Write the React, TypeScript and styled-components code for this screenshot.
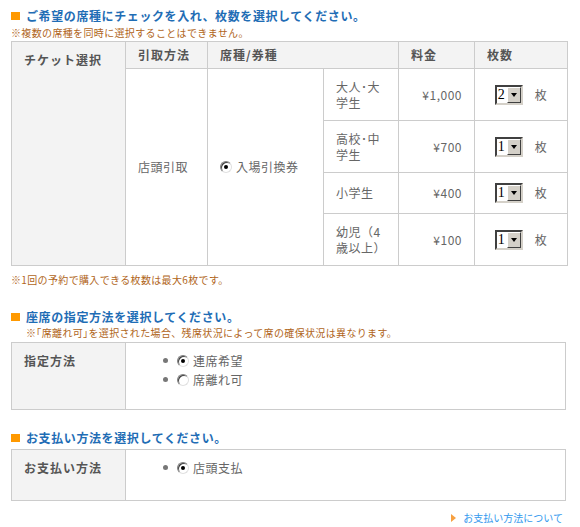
import React from "react";
import styled, { createGlobalStyle } from "styled-components";

const GlobalStyle = createGlobalStyle`
  html, body {
    margin: 0;
    padding: 0;
    background: #ffffff;
  }
  body {
    font-family: "Noto Sans CJK JP", "Noto Sans", sans-serif;
    font-size: 12px;
    color: #666666;
  }
`;

const Page = styled.div`
  width: 556px;
  padding: 8px 0 0 11px;
`;

const Heading = styled.h2<{ $top?: number }>`
  display: flex;
  align-items: center;
  gap: 6px;
  margin: ${(p) => p.$top ?? 0}px 0 0;
  font-size: 12px;
  line-height: 16px;
  font-weight: bold;
  letter-spacing: 0.6px;
  color: #1f6db5;
`;

const Square = styled.span`
  width: 9px;
  height: 8px;
  background: #ff9900;
  flex: none;
`;

const Note = styled.p<{ $top?: number; $indent?: number }>`
  margin: ${(p) => p.$top ?? 0}px 0 0 ${(p) => p.$indent ?? 0}px;
  font-size: 10px;
  line-height: 14px;
  letter-spacing: 0.35px;
  color: #b0651a;
`;

const Table = styled.table<{ $top?: number; $width: number }>`
  width: ${(p) => p.$width}px;
  margin-top: ${(p) => p.$top ?? 0}px;
  border-collapse: collapse;
  table-layout: fixed;
  border: 1px solid #cccccc;

  th,
  td {
    border: 1px solid #cccccc;
    text-align: left;
    vertical-align: middle;
    padding: 0 12px;
    line-height: 16px;
  }
`;

const LabelCell = styled.th`
  background: #f3f3f3;
  vertical-align: top !important;
  padding-top: 10px !important;
  font-weight: bold;
  letter-spacing: 1px;
  color: #555555;
`;

const HeadCell = styled.th`
  background: #f3f3f3;
  height: 26px;
  font-weight: bold;
  letter-spacing: 1px;
  color: #555555;
`;

const Cell = styled.td<{ $align?: string }>`
  text-align: ${(p) => p.$align ?? "left"} !important;
  letter-spacing: 0.5px;
  color: #666666;
`;

const TypeRow = styled.tr<{ $h: number }>`
  height: ${(p) => p.$h}px;
`;

const Count = styled.div`
  display: flex;
  align-items: center;
  justify-content: center;
  gap: 12px;
`;

const SelectBox = styled.span`
  display: inline-flex;
  width: 28px;
  height: 20px;
  box-sizing: border-box;
  border-style: solid;
  border-width: 2px;
  border-color: #404040 #d4d0c8 #d4d0c8 #404040;
  background: #ffffff;
`;

const SelectValue = styled.span`
  flex: 1;
  font-family: "Liberation Serif", serif;
  font-size: 14px;
  line-height: 16px;
  color: #000000;
  padding-left: 1px;
`;

const SelectButton = styled.span`
  width: 14px;
  box-sizing: border-box;
  background: #d4d0c8;
  border-style: solid;
  border-width: 1px;
  border-color: #ffffff #404040 #404040 #ffffff;
  display: flex;
  align-items: center;
  justify-content: center;

  &::after {
    content: "";
    border-left: 3.5px solid transparent;
    border-right: 3.5px solid transparent;
    border-top: 4px solid #000000;
  }
`;

const Radio = styled.span<{ $checked?: boolean }>`
  position: relative;
  display: inline-block;
  width: 12px;
  height: 12px;
  box-sizing: border-box;
  border-radius: 50%;
  border: 1px solid;
  border-color: #808080 #e0e0e0 #e0e0e0 #808080;
  box-shadow: inset 1px 1px 0 #404040;
  background: #ffffff;
  flex: none;

  &::after {
    content: "";
    display: ${(p) => (p.$checked ? "block" : "none")};
    position: absolute;
    left: 3px;
    top: 3px;
    width: 4px;
    height: 4px;
    border-radius: 50%;
    background: #000000;
  }
`;

const RadioLabel = styled.label`
  display: inline-flex;
  align-items: center;
  gap: 4px;
  letter-spacing: 0.5px;
  color: #666666;
`;

const OptionList = styled.ul<{ $bottom: number }>`
  list-style: none;
  margin: 0 0 ${(p) => p.$bottom}px;
  padding: 8px 0 0 25px;
`;

const OptionItem = styled.li`
  display: flex;
  align-items: center;
  gap: 9px;
  height: 19px;

  &::before {
    content: "";
    width: 5px;
    height: 5px;
    border-radius: 50%;
    background: #777777;
  }
`;

const LinkRow = styled.div`
  display: flex;
  justify-content: flex-end;
  align-items: center;
  gap: 7px;
  margin-top: 10px;
  padding-right: 4px;
`;

const Arrow = styled.span`
  border-top: 4px solid transparent;
  border-bottom: 4px solid transparent;
  border-left: 5px solid #f7a040;
`;

const InfoLink = styled.a`
  font-size: 10px;
  line-height: 14px;
  color: #3399ee;
  text-decoration: none;
`;

const tickets = [
  { name: "大人･大学生", price: "¥1,000", qty: 2, h: 52 },
  { name: "高校･中学生", price: "¥700", qty: 1, h: 52 },
  { name: "小学生", price: "¥400", qty: 1, h: 41 },
  { name: "幼児（4歳以上）", price: "¥100", qty: 1, h: 52 },
];

const Select: React.FC<{ value: number }> = ({ value }) => (
  <SelectBox>
    <SelectValue>{value}</SelectValue>
    <SelectButton />
  </SelectBox>
);

const App: React.FC = () => {
  return (
    <Page>
      <GlobalStyle />
      <Heading>
        <Square />
        ご希望の席種にチェックを入れ、枚数を選択してください。
      </Heading>
      <Note $top={2}>※複数の席種を同時に選択することはできません。</Note>

      <Table $width={556} $top={1}>
        <colgroup>
          <col style={{ width: 114 }} />
          <col style={{ width: 82 }} />
          <col style={{ width: 116 }} />
          <col style={{ width: 75 }} />
          <col style={{ width: 76 }} />
          <col style={{ width: 93 }} />
        </colgroup>
        <tbody>
          <tr>
            <LabelCell rowSpan={5}>チケット選択</LabelCell>
            <HeadCell>引取方法</HeadCell>
            <HeadCell colSpan={2}>席種/券種</HeadCell>
            <HeadCell>料金</HeadCell>
            <HeadCell>枚数</HeadCell>
          </tr>
          {tickets.map((t, i) => (
            <TypeRow key={t.name} $h={t.h}>
              {i === 0 && (
                <>
                  <Cell rowSpan={4}>店頭引取</Cell>
                  <Cell rowSpan={4}>
                    <RadioLabel>
                      <Radio $checked />
                      入場引換券
                    </RadioLabel>
                  </Cell>
                </>
              )}
              <Cell>{t.name}</Cell>
              <Cell $align="right">{t.price}</Cell>
              <Cell>
                <Count>
                  <Select value={t.qty} />
                  <span>枚</span>
                </Count>
              </Cell>
            </TypeRow>
          ))}
        </tbody>
      </Table>
      <Note $top={7}>※1回の予約で購入できる枚数は最大6枚です。</Note>

      <Heading $top={22}>
        <Square />
        座席の指定方法を選択してください。
      </Heading>
      <Note $top={1} $indent={15}>
        ※｢席離れ可｣を選択された場合、残席状況によって席の確保状況は異なります。
      </Note>
      <Table $width={555} $top={2}>
        <colgroup>
          <col style={{ width: 114 }} />
          <col />
        </colgroup>
        <tbody>
          <tr>
            <LabelCell>指定方法</LabelCell>
            <Cell>
              <OptionList $bottom={20}>
                <OptionItem>
                  <RadioLabel>
                    <Radio $checked />
                    連席希望
                  </RadioLabel>
                </OptionItem>
                <OptionItem>
                  <RadioLabel>
                    <Radio />
                    席離れ可
                  </RadioLabel>
                </OptionItem>
              </OptionList>
            </Cell>
          </tr>
        </tbody>
      </Table>

      <Heading $top={20}>
        <Square />
        お支払い方法を選択してください。
      </Heading>
      <Table $width={555} $top={3}>
        <colgroup>
          <col style={{ width: 114 }} />
          <col />
        </colgroup>
        <tbody>
          <tr>
            <LabelCell>お支払い方法</LabelCell>
            <Cell>
              <OptionList $bottom={23}>
                <OptionItem>
                  <RadioLabel>
                    <Radio $checked />
                    店頭支払
                  </RadioLabel>
                </OptionItem>
              </OptionList>
            </Cell>
          </tr>
        </tbody>
      </Table>

      <LinkRow>
        <Arrow />
        <InfoLink href="#">お支払い方法について</InfoLink>
      </LinkRow>
    </Page>
  );
};

export default App;
